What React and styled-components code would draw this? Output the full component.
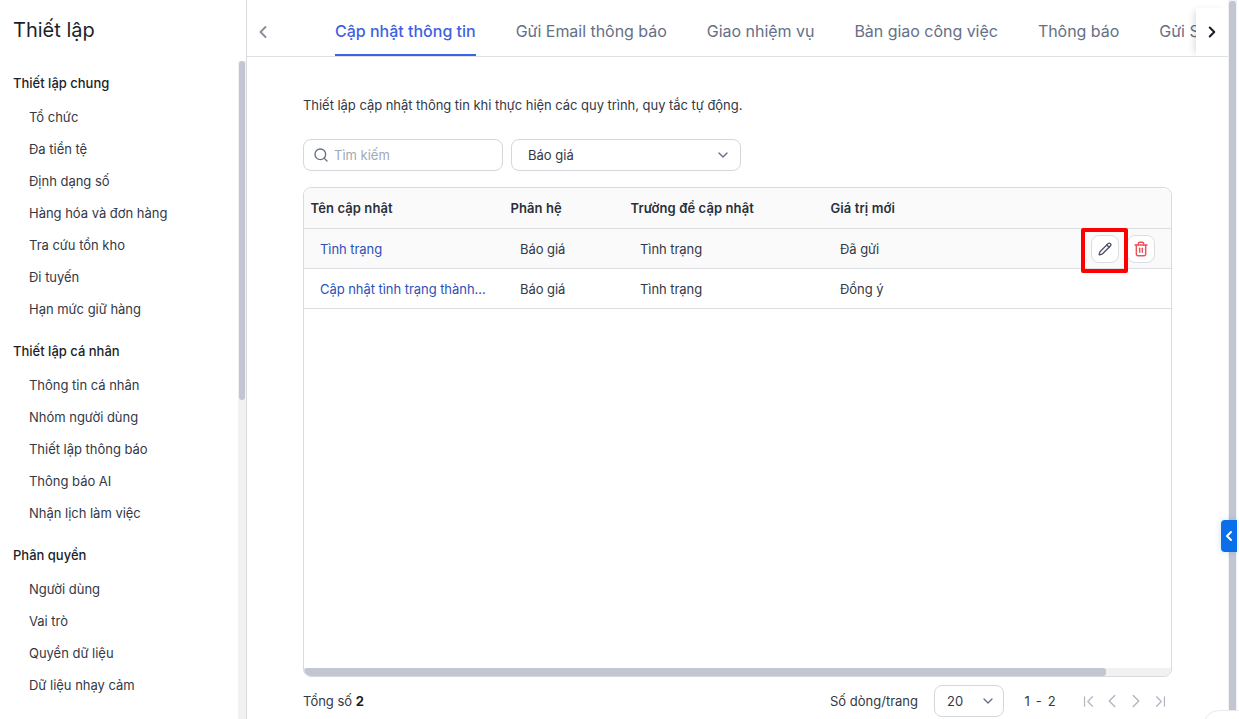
import React from 'react';
import styled, { createGlobalStyle } from 'styled-components';
import {
  Search, ChevronDown, Pencil, Trash2, ChevronLeft, ChevronRight, ChevronFirst, ChevronLast,
} from 'lucide-react';

const GlobalStyle = createGlobalStyle`
  html, body {
    margin: 0;
    padding: 0;
    height: 100%;
    overflow: hidden;
    background: white;
  }
  body {
    font-family: Inter, "Noto Sans", sans-serif;
    font-size: 13px;
    color: #1f2430;
  }
  * { box-sizing: border-box; }
`;

const Page = styled.div`
  position: relative;
  width: 1239px;
  height: 719px;
  display: flex;
  overflow: hidden;
`;

const Sidebar = styled.aside`
  position: relative;
  width: 247px;
  flex: none;
  height: 100%;
  border-right: 1px solid #d9dade;
  padding: 16px 0 0 13px;
  overflow: hidden;
`;

const SideTitle = styled.h1`
  margin: 0 0 29px;
  font-size: 20px;
  line-height: 28px;
  font-weight: 400;
  color: #1b1f2a;
`;

const SideGroup = styled.div`
  margin-bottom: 10px;
`;

const GroupName = styled.div`
  height: 34px;
  line-height: 20px;
  font-size: 13px;
  color: #1b1f2a;
  font-weight: 500;
`;

const SideItem = styled.div`
  height: 32px;
  line-height: 20px;
  padding-left: 16px;
  font-size: 13px;
  letter-spacing: -0.02px;
  color: #333846;
`;

const Track = styled.div`
  position: absolute;
  top: ${(p) => p.$top}px;
  bottom: 0;
  left: ${(p) => p.$left}px;
  width: ${(p) => p.$width}px;
  padding: 0 1px;
  background: #f1f1f1;
`;

const Thumb = styled.div`
  height: ${(p) => p.$height}px;
  margin-top: ${(p) => p.$offset || 0}px;
  border-radius: 3px;
  background: #c1c6d2;
`;

const Main = styled.main`
  flex: 1;
  min-width: 0;
  height: 100%;
  padding-right: 11px;
  display: flex;
  flex-direction: column;
`;

const TabBar = styled.div`
  position: relative;
  height: 57px;
  flex: none;
  border-bottom: 1px solid #dfe0e4;
  display: flex;
  overflow: hidden;
`;

const TabArrow = styled.div`
  width: 32px;
  height: 56px;
  flex: none;
  padding-top: 7px;
  display: flex;
  align-items: center;
  justify-content: center;
  color: #8a8f9c;
`;

const TabList = styled.div`
  flex: 1;
  min-width: 0;
  display: flex;
  gap: 40px;
  padding-left: 56px;
  overflow: hidden;
`;

const Tab = styled.div`
  flex: none;
  height: 56px;
  padding-top: 20px;
  line-height: 22px;
  font-size: 16px;
  white-space: nowrap;
  font-weight: ${(p) => (p.$active ? 500 : 400)};
  letter-spacing: ${(p) => (p.$active ? 0 : '-0.03px')};
  color: ${(p) => (p.$active ? '#3f62e0' : '#667085')};
  border-bottom: 2px solid ${(p) => (p.$active ? '#3f62e0' : 'transparent')};
`;

const RightArrow = styled(TabArrow)`
  background: white;
  color: #1b1f2a;
  box-shadow: -4px 0 6px -2px rgba(0, 0, 0, 0.12);
  margin-top: 8px;
  height: 48px;
  padding-top: 0;
`;

const Content = styled.div`
  flex: 1;
  min-height: 0;
  padding: 39px 56px 0 56px;
  display: flex;
  flex-direction: column;
`;

const Intro = styled.p`
  margin: 0 0 25px;
  line-height: 18px;
  font-size: 13px;
  letter-spacing: -0.04px;
  color: #333846;
`;

const Filters = styled.div`
  display: flex;
  gap: 8px;
  margin-bottom: 16px;
`;

const SearchBox = styled.div`
  width: 200px;
  height: 32px;
  border: 1px solid #d5d7dc;
  border-radius: 8px;
  display: flex;
  align-items: center;
  gap: 5px;
  padding-left: 9px;
  color: #667085;
`;

const Placeholder = styled.span`
  color: #a2a8b6;
  font-size: 13px;
`;

const Select = styled.div`
  width: ${(p) => p.$width}px;
  height: 32px;
  border: 1px solid #d5d7dc;
  border-radius: 8px;
  display: flex;
  align-items: center;
  justify-content: space-between;
  padding: 0 ${(p) => p.$right}px 0 ${(p) => p.$left}px;
  font-size: 13px;
  color: #333846;
  svg { color: #667085; }
`;

const TableWrap = styled.div`
  position: relative;
  height: 490px;
  flex: none;
  border: 1px solid #d9dade;
  border-radius: 8px;
  overflow: hidden;
`;

const Row = styled.div`
  display: grid;
  grid-template-columns: 200px 120px 200px 1fr;
  align-items: center;
  height: ${(p) => p.$height}px;
  border-bottom: 1px solid #dcdde1;
  background: ${(p) => p.$bg || 'white'};
`;

const HeadCell = styled.div`
  padding-left: 6.5px;
  font-size: 13px;
  font-weight: 600;
  letter-spacing: 0.1px;
  color: #2b2f3b;
`;

const Cell = styled.div`
  padding-left: 16px;
  font-size: 13px;
  letter-spacing: -0.05px;
  color: #333846;
  white-space: nowrap;
`;

const LinkCell = styled(Cell)`
  color: #2f50b8;
  overflow: hidden;
  padding-right: 16px;
  text-overflow: ellipsis;
`;

const RowActions = styled.div`
  position: absolute;
  top: 47px;
  right: 16px;
  display: flex;
  gap: 8px;
`;

const IconButton = styled.button`
  width: 28px;
  height: 28px;
  padding: 0;
  border: 1px solid #dcdde1;
  border-radius: 8px;
  background: white;
  display: flex;
  align-items: center;
  justify-content: center;
  color: ${(p) => p.$color};
`;

const Highlight = styled.div`
  position: absolute;
  left: 1081px;
  top: 228px;
  width: 47px;
  height: 45px;
  border: 4px solid #ff0000;
  border-radius: 2px;
`;

const HScroll = styled.div`
  position: absolute;
  left: 0;
  right: 0;
  bottom: 0;
  height: 8px;
  background: #f1f1f1;
`;

const HThumb = styled.div`
  width: 802px;
  height: 8px;
  border-radius: 3px;
  background: #c1c6d2;
`;

const Footer = styled.div`
  display: flex;
  align-items: center;
  height: 32px;
  margin-top: 8px;
  font-size: 13px;
  color: #333846;
`;

const Total = styled.div`
  flex: 1;
  b { color: #1b1f2a; font-weight: 700; }
`;

const PageSizeLabel = styled.span`
  margin-right: 16px;
`;

const PageRange = styled.div`
  width: 32px;
  margin: 0 20px;
  letter-spacing: 0.3px;
  word-spacing: 1.7px;
  text-align: right;
  white-space: nowrap;
`;

const Pager = styled.div`
  display: flex;
  color: #b0b5c1;
`;

const PagerCell = styled.div`
  width: 24px;
  display: flex;
  align-items: center;
  justify-content: center;
`;

const FloatTab = styled.div`
  position: absolute;
  left: 1221px;
  top: 520px;
  width: 16px;
  height: 32px;
  background: #0a6fe8;
  border-radius: 4px 0 0 4px;
  box-shadow: 0 0 6px rgba(10, 111, 232, 0.2);
  display: flex;
  align-items: center;
  justify-content: center;
  color: white;
`;

const CornerBubble = styled.div`
  position: absolute;
  left: 1203px;
  top: 710px;
  width: 60px;
  height: 40px;
  border-radius: 16px;
  background: white;
  border: 1px solid #e9eaec;
`;

const groups = [
  { name: 'Thiết lập chung', items: ['Tổ chức', 'Đa tiền tệ', 'Định dạng số', 'Hàng hóa và đơn hàng', 'Tra cứu tồn kho', 'Đi tuyến', 'Hạn mức giữ hàng'] },
  { name: 'Thiết lập cá nhân', items: ['Thông tin cá nhân', 'Nhóm người dùng', 'Thiết lập thông báo', 'Thông báo AI', 'Nhận lịch làm việc'] },
  { name: 'Phân quyền', items: ['Người dùng', 'Vai trò', 'Quyền dữ liệu', 'Dữ liệu nhạy cảm'] },
];

const tabs = ['Cập nhật thông tin', 'Gửi Email thông báo', 'Giao nhiệm vụ', 'Bàn giao công việc', 'Thông báo', 'Gửi SMS'];

const rows = [
  { name: 'Tình trạng', module: 'Báo giá', field: 'Tình trạng', value: 'Đã gửi', hover: true },
  { name: 'Cập nhật tình trạng thành công', module: 'Báo giá', field: 'Tình trạng', value: 'Đồng ý' },
];

export default function App() {
  return (
    <Page>
      <GlobalStyle />
      <Sidebar>
        <SideTitle>Thiết lập</SideTitle>
        {groups.map((g) => (
          <SideGroup key={g.name}>
            <GroupName>{g.name}</GroupName>
            {g.items.map((item) => <SideItem key={item}>{item}</SideItem>)}
          </SideGroup>
        ))}
        <Track $top={61} $left={238} $width={8}><Thumb $height={339} /></Track>
      </Sidebar>

      <Main>
        <TabBar>
          <TabArrow><ChevronLeft size={20} strokeWidth={2.4} /></TabArrow>
          <TabList>
            {tabs.map((t, i) => <Tab key={t} $active={i === 0}>{t}</Tab>)}
          </TabList>
          <RightArrow><ChevronRight size={18} strokeWidth={2.8} /></RightArrow>
        </TabBar>
        <Content>
          <Intro>Thiết lập cập nhật thông tin khi thực hiện các quy trình, quy tắc tự động.</Intro>
          <Filters>
            <SearchBox>
              <Search size={16} strokeWidth={2} />
              <Placeholder>Tìm kiếm</Placeholder>
            </SearchBox>
            <Select $width={230} $left={16} $right={9}>
              Báo giá
              <ChevronDown size={16} />
            </Select>
          </Filters>
          <TableWrap>
            <Row $height={41} $bg="#fafafa">
              <HeadCell>Tên cập nhật</HeadCell>
              <HeadCell>Phân hệ</HeadCell>
              <HeadCell>Trường để cập nhật</HeadCell>
              <HeadCell>Giá trị mới</HeadCell>
            </Row>
            {rows.map((r) => (
              <Row key={r.name} $height={40} $bg={r.hover ? '#fafafa' : 'white'}>
                <LinkCell>{r.name}</LinkCell>
                <Cell>{r.module}</Cell>
                <Cell>{r.field}</Cell>
                <Cell>{r.value}</Cell>
              </Row>
            ))}
            <RowActions>
              <IconButton $color="#4a5168"><Pencil size={14} strokeWidth={2.3} /></IconButton>
              <IconButton $color="#f0525a"><Trash2 size={16} strokeWidth={2.2} /></IconButton>
            </RowActions>
            <HScroll><HThumb /></HScroll>
          </TableWrap>
          <Footer>
            <Total>Tổng số <b>2</b></Total>
            <PageSizeLabel>Số dòng/trang</PageSizeLabel>
            <Select $width={70} $left={12} $right={7}>
              20
              <ChevronDown size={16} />
            </Select>
            <PageRange>1 - 2</PageRange>
            <Pager>
              <PagerCell><ChevronFirst size={19} strokeWidth={1.5} /></PagerCell>
              <PagerCell><ChevronLeft size={22} strokeWidth={1.5} /></PagerCell>
              <PagerCell><ChevronRight size={22} strokeWidth={1.5} /></PagerCell>
              <PagerCell><ChevronLast size={19} strokeWidth={1.5} /></PagerCell>
            </Pager>
          </Footer>
        </Content>
      </Main>

      <Track $top={0} $left={1228} $width={9}><Thumb $height={718} $offset={1} /></Track>
      <Highlight />
      <FloatTab><ChevronLeft size={18} strokeWidth={3} /></FloatTab>
      <CornerBubble />
    </Page>
  );
}
